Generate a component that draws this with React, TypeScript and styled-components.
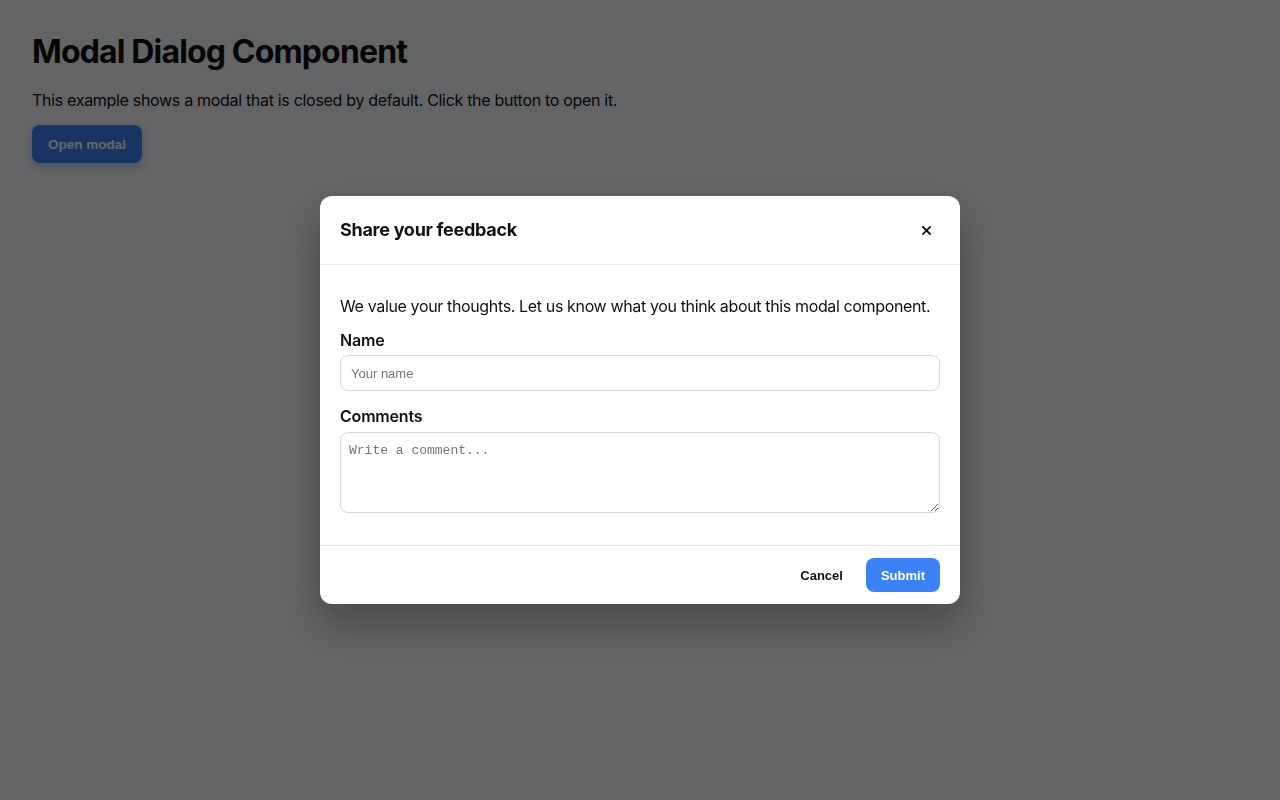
import React from "react";
import styled, { createGlobalStyle } from "styled-components";

const Global = createGlobalStyle`
  html, body { margin: 0; padding: 0; }
  body {
    background: #f8fafc;
    font-family: Inter, "Noto Sans", sans-serif;
    color: #111;
  }
`;

const Page = styled.main`
  padding: 32px;
`;

const Title = styled.h1`
  margin: 0 0 16px;
  font-size: 32px;
  line-height: 40px;
  font-weight: 700;
  letter-spacing: -0.85px;
  color: #111;
`;

const Lead = styled.p`
  margin: 0 0 13px;
  font-size: 16px;
  line-height: 24px;
  letter-spacing: -0.31px;
`;

const PrimaryButton = styled.button<{ $h?: number; $size?: number; $pad?: number; $raised?: boolean }>`
  height: ${(p) => p.$h ?? 34}px;
  padding: 0 ${(p) => p.$pad ?? 15}px;
  border: none;
  border-radius: 8px;
  background: #3b82f6;
  color: #fff;
  font-family: "Liberation Sans", Arial, sans-serif;
  font-weight: 700;
  font-size: ${(p) => p.$size ?? 13}px;
  cursor: pointer;
  box-shadow: ${(p) => (p.$raised ? "0 4px 10px rgba(59,130,246,0.35)" : "none")};
`;

const GhostButton = styled.button`
  height: 34px;
  padding: 0 14px;
  border: none;
  border-radius: 8px;
  background: transparent;
  color: #111;
  font-family: "Liberation Sans", Arial, sans-serif;
  font-weight: 700;
  font-size: 13px;
  cursor: pointer;
`;

const Overlay = styled.div`
  position: fixed;
  inset: 0;
  background: rgba(0, 0, 0, 0.6);
  display: flex;
  align-items: center;
  justify-content: center;
`;

const Dialog = styled.div`
  width: 640px;
  background: #fff;
  border-radius: 12px;
  box-shadow: 0 20px 40px rgba(0, 0, 0, 0.28);
  overflow: hidden;
`;

const Header = styled.div`
  height: 69px;
  box-sizing: border-box;
  padding: 0 18px 0 20px;
  display: flex;
  align-items: center;
  justify-content: space-between;
  border-bottom: 1px solid #e7e9ef;
`;

const DialogTitle = styled.h2`
  margin: 0;
  font-size: 18px;
  font-weight: 700;
  line-height: 24px;
  letter-spacing: -0.28px;
  color: #111;
`;

const CloseButton = styled.button`
  width: 32px;
  height: 32px;
  border: none;
  background: transparent;
  padding: 0;
  display: flex;
  align-items: center;
  justify-content: center;
  cursor: pointer;
  color: #111;
`;

const Body = styled.div`
  padding: 29px 20px 32px;
  display: flex;
  flex-direction: column;
`;

const Intro = styled.p`
  margin: 0 0 10px;
  font-size: 16px;
  line-height: 24px;
  letter-spacing: -0.36px;
`;

const Label = styled.label<{ $top?: number; $bottom?: number }>`
  display: block;
  margin: ${(p) => p.$top ?? 0}px 0 ${(p) => p.$bottom ?? 3}px;
  font-size: 16px;
  line-height: 24px;
  font-weight: 600;
  letter-spacing: -0.2px;
`;

const TextInput = styled.input`
  box-sizing: border-box;
  width: 100%;
  height: 36px;
  padding: 0 10px;
  border: 1px solid #cfd8e3;
  border-radius: 8px;
  font-family: "Liberation Sans", Arial, sans-serif;
  font-size: 13px;
  outline: none;
  &::placeholder { color: #757575; }
`;

const TextArea = styled.textarea`
  box-sizing: border-box;
  width: 100%;
  height: 81px;
  padding: 10px 8px;
  border: 1px solid #cfd8e3;
  border-radius: 8px;
  font-family: "Liberation Mono", monospace;
  font-size: 13px;
  line-height: 16px;
  display: block;
  outline: none;
  &::placeholder { color: #757575; }
`;

const Footer = styled.div`
  height: 59px;
  box-sizing: border-box;
  padding: 0 20px;
  border-top: 1px solid #e7e9ef;
  display: flex;
  align-items: center;
  justify-content: flex-end;
  gap: 9px;
`;

export default function App() {
  return (
    <>
      <Global />
      <Page>
        <Title>Modal Dialog Component</Title>
        <Lead>This example shows a modal that is closed by default. Click the button to open it.</Lead>
        <PrimaryButton $h={38} $size={13.5} $pad={16} $raised>Open modal</PrimaryButton>
      </Page>
      <Overlay>
        <Dialog role="dialog" aria-modal="true">
          <Header>
            <DialogTitle>Share your feedback</DialogTitle>
            <CloseButton aria-label="Close">
              <svg width="9" height="9" viewBox="0 0 9 9">
                <path d="M1 1 L8 8 M8 1 L1 8" stroke="#111" strokeWidth="1.8" strokeLinecap="square" />
              </svg>
            </CloseButton>
          </Header>
          <Body>
            <Intro>We value your thoughts. Let us know what you think about this modal component.</Intro>
            <Label htmlFor="name">Name</Label>
            <TextInput id="name" placeholder="Your name" />
            <Label htmlFor="comments" $top={13} $bottom={4}>Comments</Label>
            <TextArea id="comments" placeholder="Write a comment..." />
          </Body>
          <Footer>
            <GhostButton>Cancel</GhostButton>
            <PrimaryButton>Submit</PrimaryButton>
          </Footer>
        </Dialog>
      </Overlay>
    </>
  );
}
